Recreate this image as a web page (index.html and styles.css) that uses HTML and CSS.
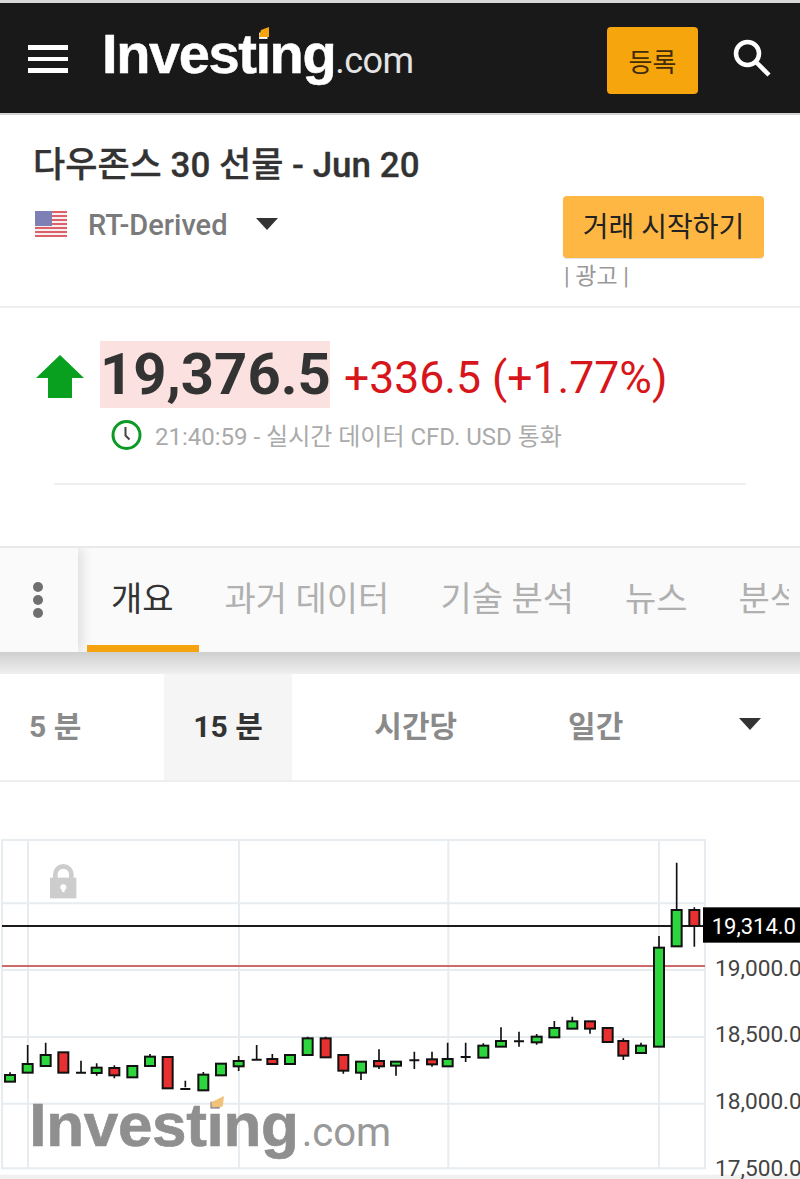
FILE: index.html
```html
<!DOCTYPE html>
<html lang="ko">
<head>
<meta charset="utf-8">
<title>다우존스 30 선물</title>
<link rel="stylesheet" href="styles.css">
</head>
<body>
<header class="topbar">
  <div class="burger"><span></span><span></span><span></span></div>
  <div class="logo"><span class="logo-main">Investing</span><span class="logo-com">.com</span><i class="logo-mark"></i></div>
  <button class="signup">등록</button>
  <svg class="search" viewBox="0 0 38 38"><circle cx="14.5" cy="14.5" r="11.5"/><path d="M23 23 36 36"/></svg>
</header>

<section class="instrument">
  <div class="inst-left">
    <h1 class="title">다우존스 30 선물 - Jun 20</h1>
    <div class="source">
      <svg class="flag" viewBox="0 0 32 26">
        <rect width="32" height="26" fill="#f3f0f2"/>
        <path d="M0 1h32M0 5h32M0 9h32M0 13h32M0 17h32M0 21h32M0 25h32" stroke="#e0606a" stroke-width="2"/>
        <rect width="17" height="15" fill="#7d7fb5"/>
      </svg>
      <span class="source-name">RT-Derived</span>
      <span class="caret"></span>
    </div>
  </div>
  <div class="inst-right">
    <button class="cta">거래 시작하기</button>
    <div class="ad">| 광고 |</div>
  </div>
</section>

<section class="quote">
  <div class="quote-main">
    <svg class="arrow" viewBox="0 0 48 43"><path d="M24 0 48 23H36V43H12V23H0Z"/></svg>
    <span class="price">19,376.5</span>
    <span class="change">+336.5 (+1.77%)</span>
  </div>
  <div class="quote-sub">
    <svg class="clock" viewBox="0 0 31 30"><circle cx="15.5" cy="15" r="13.5"/><path d="M14.5 7v8.500l4 4"/></svg>
    <span>21:40:59 - 실시간 데이터 CFD. USD 통화</span>
  </div>
  <div class="quote-rule"></div>
</section>

<nav class="tabs">
  <div class="tabs-more"><span></span><span></span><span></span></div>
  <div class="tabs-list">
    <span class="tab tab-active">개요</span>
    <span class="tab">과거 데이터</span>
    <span class="tab">기술 분석</span>
    <span class="tab">뉴스</span>
    <span class="tab">분석</span>
  </div>
</nav>
<div class="tabs-shadow"></div>

<div class="intervals">
  <span class="iv iv-5">5 분</span>
  <span class="iv iv-15">15 분</span>
  <span class="iv iv-h">시간당</span>
  <span class="iv iv-d">일간</span>
  <span class="iv-caret"></span>
</div>

<svg class="chart" viewBox="0 0 2400 1047">
  <rect class="chart-foot" x="0" y="1034" width="2400" height="13"/>
  <path class="grid" d="M6 30H2115V1015H6ZM84 30V1015M717 30V1015M1345 30V1015M1977 30V1015M6 220H2115M6 420H2115M6 621H2115M6 821H2115"/>
  <path class="lock-shackle" d="M166 150V133a24 24 0 0 1 48 0V150"/>
  <rect class="lock-body" x="150" y="143" width="79" height="62"/>
  <path class="lock-hole" d="M190 166v20"/>
  <circle class="lock-dot" cx="190" cy="172" r="9"/>
  <text class="wm-main" x="88" y="948">Investing</text>
  <text class="wm-com" x="905" y="948">.com</text>
  <path class="wm-mark" d="M634 817 672 798 668 830 636 832Z"/>
  <path class="line-last" d="M6 288H2109"/>
  <path class="line-prev" d="M6 408H2115"/>
  <path class="wick" d="M30 727V735M83 645V702M137 638V675M243 692V729M290 700V737M343 706V745M450 672V680M556 752V772M610 726V734M716 678V723M770 645V690M817 672V687M923 620V625M977 620V625M1030 722V731M1083 728V750M1137 658V717M1188 707V737M1243 665V717M1296 665V710M1343 638V687M1397 638V696M1450 640V647M1503 592V633M1557 605V650M1610 612V644M1663 573V594M1717 560V574M1770 596V611M1870 625V690M1923 638V647M1977 318V353M2030 98V240M2083 232V350"/>
  <path class="wick-thick" d="M228 728H258M755 689H785M541 777H571M1228 691H1258M1542 634H1572M1382 681H1412"/>
  <g class="up">
    <rect x="15" y="735" width="30" height="20"/>
    <rect x="68" y="702" width="30" height="26"/>
    <rect x="122" y="675" width="30" height="33"/>
    <rect x="275" y="713" width="30" height="16"/>
    <rect x="382" y="708" width="30" height="34"/>
    <rect x="435" y="680" width="30" height="28"/>
    <rect x="595" y="734" width="30" height="47"/>
    <rect x="648" y="701" width="30" height="35"/>
    <rect x="701" y="693" width="30" height="16"/>
    <rect x="855" y="675" width="30" height="27"/>
    <rect x="908" y="625" width="30" height="50"/>
    <rect x="1068" y="695" width="30" height="33"/>
    <rect x="1173" y="695" width="30" height="12"/>
    <rect x="1328" y="687" width="30" height="22"/>
    <rect x="1435" y="647" width="30" height="36"/>
    <rect x="1488" y="633" width="30" height="17"/>
    <rect x="1595" y="620" width="30" height="17"/>
    <rect x="1648" y="594" width="30" height="28"/>
    <rect x="1702" y="574" width="30" height="22"/>
    <rect x="1908" y="647" width="30" height="22"/>
    <rect x="1962" y="353" width="30" height="297"/>
    <rect x="2015" y="240" width="30" height="109"/>
  </g>
  <g class="down">
    <rect x="175" y="667" width="30" height="61"/>
    <rect x="328" y="714" width="30" height="22"/>
    <rect x="488" y="681" width="30" height="94"/>
    <rect x="802" y="687" width="30" height="15"/>
    <rect x="962" y="625" width="30" height="57"/>
    <rect x="1015" y="675" width="30" height="47"/>
    <rect x="1122" y="693" width="30" height="16"/>
    <rect x="1281" y="688" width="30" height="15"/>
    <rect x="1755" y="574" width="30" height="22"/>
    <rect x="1808" y="594" width="30" height="42"/>
    <rect x="1855" y="633" width="30" height="44"/>
    <rect x="2068" y="240" width="30" height="48"/>
  </g>
  <rect class="last-box" x="2109" y="232" width="291" height="106"/>
  <text class="last-label" x="2135" y="312">19,314.0</text>
  <text class="axis" x="2145" y="438">19,000.0</text>
  <text class="axis" x="2145" y="637">18,500.0</text>
  <text class="axis" x="2145" y="837">18,000.0</text>
  <text class="axis" x="2145" y="1037">17,500.0</text>
</svg>
</body>
</html>
```

FILE: styles.css
```css
* { box-sizing: border-box; }
html, body { margin: 0; padding: 0; }
body {
  width: 800px;
  height: 1179px;
  overflow: hidden;
  background: #fff;
  font-family: Roboto, "Noto Sans CJK KR", sans-serif;
  color: #333;
}
button { font-family: inherit; border: 0; padding: 0; }

.topbar {
  height: 115px;
  border-top: 3px solid #d8d8d8;
  border-bottom: 2px solid #d4d4d4;
  background: #191919;
  display: flex;
  align-items: center;
  padding-left: 28px;
}
.burger { width: 40px; display: flex; flex-direction: column; gap: 7px; margin-top: 2px; }
.burger span { height: 4.500px; background: #fff; }
.logo {
  position: relative;
  margin-left: 34px;
  width: 310px;
  display: flex;
  align-items: baseline;
  color: #fff;
  margin-top: -9px;
}
.logo-main { font: 700 56px "Liberation Sans", sans-serif; letter-spacing: -1.400px; -webkit-text-stroke: 0.500px #fff; }
.logo-com { font: 400 36px Roboto, sans-serif; letter-spacing: -0.500px; color: #e4e4e4; }
.logo-mark {
  position: absolute;
  left: 157px;
  top: 6px;
  width: 10px;
  height: 10px;
  background: #f5a30f;
  clip-path: polygon(20% 30%, 100% 0, 100% 100%, 0 100%);
}
.signup {
  margin-left: 195px;
  margin-top: 4px;
  width: 91px;
  height: 67px;
  background: #f6a50c;
  border-radius: 4px;
  color: #3f2c08;
  font-size: 26px;
}
.search { width: 38px; height: 38px; margin-left: 35px; fill: none; stroke: #fff; stroke-width: 4.500; }

.instrument {
  height: 193px;
  border-bottom: 2px solid #eee;
  display: flex;
  justify-content: space-between;
  padding: 0 36px 0 33px;
}
.title { margin: 29px 0 0; font-size: 35px; line-height: 44px; font-weight: 500; color: #333; -webkit-text-stroke: 0.300px #333; }
.source { display: flex; align-items: center; margin: 18px 0 0 2px; }
.flag { width: 32px; height: 26px; }
.source-name { margin: 2px 0 0 21px; font-size: 29px; font-weight: 500; color: #7a7a7a; }
.caret {
  margin-left: 28px;
  margin-top: -1px;
  border-style: solid;
  border-width: 12px 11px 0;
  border-color: #333 transparent transparent;
}
.inst-right { width: 201px; margin-top: 81px; }
.cta {
  display: block;
  width: 201px;
  height: 62px;
  padding-bottom: 4px;
  background: #fdb742;
  border-radius: 4px;
  box-shadow: 0 1px 1px #e3e3e3;
  color: #222;
  font-size: 28px;
}
.ad { margin: 3px 0 0 1px; font-size: 23px; line-height: 32px; color: #999; }

.quote { height: 238px; padding-top: 33px; }
.quote-main { display: flex; align-items: center; padding-left: 36px; }
.arrow { width: 48px; height: 43px; fill: #09a020; margin-top: 4px; }
.price {
  margin-left: 16px;
  width: 230px;
  height: 67px;
  background: #fbe1e0;
  font-size: 58px;
  line-height: 67px;
  font-weight: 700;
  text-align: center;
  color: #333;
}
.change { margin-left: 14px; font-size: 44.500px; margin-top: 6px; color: #d7161c; }
.quote-sub { display: flex; align-items: center; margin: 9px 0 0 111px; font-size: 24px; color: #aaa; }
.clock { width: 31px; height: 30px; margin-right: 13px; fill: none; stroke: #0c9a26; stroke-width: 3; }
.clock path { stroke: #444; stroke-width: 2; }
.quote-rule { height: 2px; margin: 31px 54px 0; background: #eee; }

.tabs {
  height: 106px;
  background: #fafafa;
  border-top: 2px solid #e9e9e9;
  display: flex;
  overflow: hidden;
}
.tabs-more {
  width: 78px;
  flex: none;
  display: flex;
  flex-direction: column;
  align-items: center;
  justify-content: center;
  gap: 3px;
  padding-right: 3px;
  box-shadow: 5px 0 10px rgba(0, 0, 0, .1);
}
.tabs-more span { width: 10px; height: 10px; border-radius: 50%; background: #6f6f6f; }
.tabs-list { display: flex; width: 711px; overflow: hidden; gap: 51px; padding-left: 33px; flex: none; }
.tab { flex: none; position: relative; font-size: 34px; line-height: 102px; color: #b0b0b0; height: 104px; }
.tab-active { color: #333; }
.tab-active::after {
  content: "";
  position: absolute;
  left: -24px;
  width: 112px;
  bottom: 0;
  height: 7px;
  background: #f5a30f;
}
.tabs-shadow { height: 22px; background: linear-gradient(#cfcfcf, #f0f0f0); }

.intervals {
  height: 108px;
  border-bottom: 2px solid #eee;
  display: flex;
  align-items: center;
  font-size: 30px;
  font-weight: 700;
  color: #8a8a8a;
}
.iv { display: flex; align-items: center; height: 100%; padding-bottom: 6px; }
.iv-5 { margin-left: 29px; }
.iv-15 { margin-left: 83px; width: 128px; padding-left: 29px; background: #f5f5f5; color: #333; }
.iv-h { margin-left: 82px; }
.iv-d { margin-left: 111px; }
.iv-caret {
  margin-left: 116px;
  margin-top: -6px;
  border-style: solid;
  border-width: 12px 11.500px 0;
  border-color: #333 transparent transparent;
}

.chart { display: block; width: 800px; height: 349px; margin-top: 48px; font-family: Roboto, sans-serif; }
.chart-foot { fill: #f1f1f1; }
.grid { fill: none; stroke: #e7ecf0; stroke-width: 6; }
.line-last { fill: none; stroke: #1c1c1c; stroke-width: 6; }
.line-prev { fill: none; stroke: #cf6a6a; stroke-width: 6; }
.wick { fill: none; stroke: #111; stroke-width: 5; }
.wick-thick { fill: none; stroke: #111; stroke-width: 6; }
.up rect { fill: #2cd63c; stroke: #111; stroke-width: 6; }
.down rect { fill: #e93030; stroke: #111; stroke-width: 6; }
.lock-shackle { fill: none; stroke: #cdcdcd; stroke-width: 14; }
.lock-body { fill: #cdcdcd; }
.lock-hole { fill: none; stroke: #fff; stroke-width: 8; }
.lock-dot { fill: #fff; }
.wm-main { font: 700 186px "Liberation Sans", sans-serif; letter-spacing: -1px; fill: #8f8f8f; stroke: #8f8f8f; stroke-width: 2; }
.wm-com { font: 400 120px Roboto, sans-serif; fill: #999; }
.wm-mark { fill: #f3c27a; }
.last-box { fill: #000; }
.last-label { font-size: 66px; fill: #fff; }
.axis { font-size: 68px; fill: #444; }
```
